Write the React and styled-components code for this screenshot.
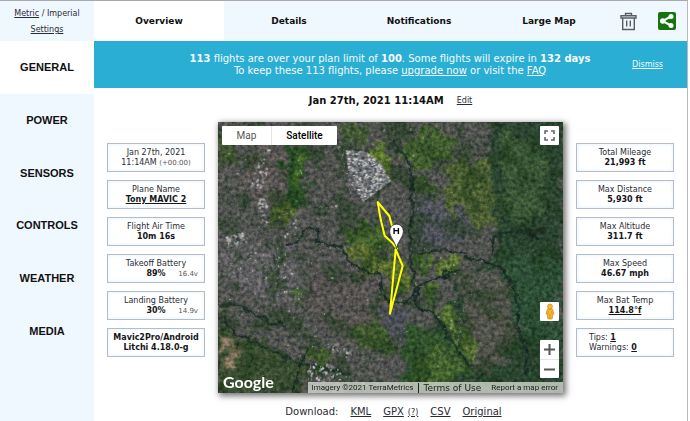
import { useState } from "react";
import styled, { createGlobalStyle } from "styled-components";

const GlobalStyle = createGlobalStyle`
  * {
    box-sizing: border-box;
  }

  body {
    margin: 0;
    background: #fff;
    font-family: "DejaVu Sans", Verdana, sans-serif;
    font-size: 8px;
    color: #2b2b35;
  }

  a {
    color: inherit;
  }

  button {
    font: inherit;
    color: inherit;
    border: none;
    padding: 0;
    background: none;
    cursor: pointer;
  }
`;

const Page = styled.div`
  display: flex;
  min-height: 100vh;
  margin-right: 2px;
  border-top: 1px solid #a9a9ad;
  border-right: 1px solid #b9b9bd;
`;

const Sidebar = styled.aside`
  display: flex;
  flex-direction: column;
  flex: 0 0 94px;
  background: #f0f8ff;
`;

const Units = styled.div`
  display: flex;
  flex-direction: column;
  align-items: center;
  height: 40px;
  padding-top: 5px;
  line-height: 16px;
`;

const SideNav = styled.nav`
  display: grid;
  grid-auto-rows: 1fr;
  min-height: 316px;
`;

const SideButton = styled.button`
  font-family: "Liberation Sans", Arial, sans-serif;
  font-size: 11px;
  font-weight: bold;
  color: #111;
  background: ${(props) => (props.$active ? "#fff" : "transparent")};
`;

const Main = styled.main`
  flex: 1;
  min-width: 0;
`;

const TopBar = styled.header`
  display: flex;
  height: 40px;
  background: #f0f8ff;
`;

const Tab = styled.button`
  flex: 130 1 0;
  font-size: 9px;
  font-weight: bold;
  color: #111;
  background: ${(props) => (props.$active ? "#fff" : "transparent")};
`;

const Tools = styled.div`
  display: flex;
  flex: 68 1 0;
  align-items: center;
  justify-content: center;
  gap: 21px;
  padding-right: 5px;

  button {
    display: flex;
  }
`;

const Banner = styled.section`
  display: flex;
  align-items: center;
  height: 47px;
  padding: 0 24px;
  background: #2aaed3;
  color: #f4fcff;
`;

const BannerText = styled.p`
  flex: 1;
  margin: 0;
  padding-left: 30px;
  font-size: 10px;
  line-height: 12px;
  text-align: center;
`;

const LinkButton = styled.button`
  text-decoration: underline;
`;

const TitleRow = styled.div`
  display: flex;
  align-items: center;
  justify-content: center;
  gap: 13px;
  height: 34px;
  padding: 0 0 10px;
`;

const Title = styled.h1`
  margin: 0;
  font-size: 10px;
  color: #111;
`;

const Overview = styled.div`
  display: grid;
  grid-template-columns: 98px 1fr 98px;
  gap: 13px;
  padding: 0 13px;
`;

const Stats = styled.div`
  display: flex;
  flex-direction: column;
  gap: 8px;
  padding-top: 21px;
`;

const StatBox = styled.div`
  display: flex;
  flex-direction: column;
  justify-content: center;
  height: 29px;
  padding: 0 ${(props) => (props.$left ? "12px" : "0")};
  border: 1px solid #b4bcc8;
  box-shadow: inset 0 0 4px #e4f1fd;
  line-height: 10px;
  text-align: ${(props) => (props.$left ? "left" : "center")};
  white-space: nowrap;

  b {
    color: #15151a;
  }
`;

const ValueRow = styled.div`
  display: grid;
  grid-template-columns: 1fr auto 1fr;
  padding-right: 6px;
  padding-left: 6px;
`;

const Small = styled.small`
  font-size: 7px;
  color: #55555c;
`;

const Volts = styled(Small)`
  grid-column: 3;
  text-align: right;
`;

const Value = styled.b`
  grid-column: 2;
`;

const MapFrame = styled.div`
  position: relative;
  aspect-ratio: 345 / 271;
  box-shadow: 2px 2px 6px 1px rgba(0, 0, 0, 0.55);
  overflow: hidden;
  font-family: Roboto, sans-serif;
`;

const Terrain = styled.svg`
  display: block;
  width: 100%;
  height: 100%;
`;

const MapTypes = styled.div`
  position: absolute;
  top: 4px;
  left: 4px;
  display: flex;
  height: 19px;
  background: #fff;
  border-radius: 1px;
`;

const MapType = styled.button`
  width: ${(props) => (props.$active ? "66px" : "49px")};
  border-left: ${(props) => (props.$active ? "1px solid #e6e6e6" : "none")};
  font-size: 10px;
  font-weight: ${(props) => (props.$active ? 500 : 400)};
  color: ${(props) => (props.$active ? "#000" : "#565656")};
`;

const FullScreen = styled.button`
  position: absolute;
  top: 4px;
  right: 4px;
  display: grid;
  place-items: center;
  width: 19px;
  height: 19px;
  background: #fff;
  border-radius: 1px;
`;

const Controls = styled.div`
  position: absolute;
  right: 4px;
  bottom: 15px;
  display: flex;
  flex-direction: column;
  gap: 19px;
`;

const ControlGroup = styled.div`
  display: flex;
  flex-direction: column;
  background: #fff;
  border-radius: 1px;

  button {
    display: grid;
    place-items: center;
    width: 19px;
    height: 19px;
  }

  button + button {
    border-top: 1px solid #e6e6e6;
  }
`;

const Logo = styled.a`
  position: absolute;
  bottom: 1px;
  left: 5px;
  font-family: Lato, sans-serif;
  font-size: 16px;
  font-weight: bold;
  line-height: 20px;
  color: #fff;
  text-decoration: none;
`;

const Credits = styled.div`
  position: absolute;
  right: 0;
  bottom: 0;
  display: flex;
  align-items: center;
  height: 11px;
  padding-left: 4px;
  background: rgba(214, 219, 210, 0.78);
  color: #222;
  white-space: nowrap;

  a {
    padding: 0 5px;
    text-decoration: none;
  }
`;

const Terms = styled.a`
  margin-left: 4px;
  border-left: 1px solid #222;
  font-family: "DejaVu Sans", Verdana, sans-serif;
  font-size: 9px;
`;

const Downloads = styled.footer`
  display: flex;
  align-items: center;
  justify-content: center;
  gap: 12px;
  height: 36px;
  padding-left: 6px;
  font-size: 10px;
`;

const DownloadGroup = styled.span`
  display: flex;
  align-items: baseline;
  gap: 4px;

  a + a {
    font-size: 8px;
  }
`;

const sections = ["GENERAL", "POWER", "SENSORS", "CONTROLS", "WEATHER", "MEDIA"];
const tabs = ["Overview", "Details", "Notifications", "Large Map"];

const rightStats = [
  { label: "Total Mileage", value: "21,993 ft" },
  { label: "Max Distance", value: "5,930 ft" },
  { label: "Max Altitude", value: "311.7 ft" },
  { label: "Max Speed", value: "46.67 mph" },
  { label: "Max Bat Temp", value: "114.8°f", link: true },
];

const patches = [
  // woodland on the east side
  { fill: "#2b4430", d: "M820 0H1040V830H560L600 640 690 600 740 480 830 400 850 330 800 240Z" },
  { fill: "#3a5636", d: "M850 30 960 60 1000 200 940 310 850 270Z" },
  { fill: "#2f5038", d: "M860 400 1035 420V620L950 680 890 560Z" },
  { fill: "#32522d", d: "M570 600 700 640 780 760 700 800 560 800Z" },
  { fill: "#43622f", d: "M600 700 680 680 740 740 700 800 590 790Z" },
  { fill: "#51534b", d: "M740 480 850 440 900 600 880 730 800 760 720 610Z" },
  // parkland
  { fill: "#4d5f34", d: "M690 130 820 110 840 330 740 310 680 240Z" },
  { fill: "#415c2f", d: "M560 60 660 30 720 80 660 130 590 150 550 110Z" },
  { fill: "#3a512e", d: "M590 180 650 190 670 280 610 300Z" },
  { fill: "#5b762d", d: "M455 100 500 70 525 130 515 170Z" },
  { fill: "#274a24", d: "M205 80 270 80 275 200 250 260 205 240Z" },
  { fill: "#426429", d: "M225 130 270 100 260 210 235 230Z" },
  { fill: "#4b5d2a", d: "M160 270 220 240 250 260 210 310 160 330Z" },
  { fill: "#486431", d: "M400 330 470 300 510 350 530 400 440 380 390 370Z" },
  { fill: "#586a30", d: "M385 385 440 370 510 410 590 420 590 510 540 520 490 450 420 440Z" },
  { fill: "#5e7434", d: "M650 440 700 400 740 410 730 460 660 470Z" },
  { fill: "#527032", d: "M600 410 640 400 640 450 605 465Z" },
  { fill: "#4b6832", d: "M610 490 660 490 660 540 620 550Z" },
  { fill: "#587234", d: "M640 560 720 570 725 650 660 600Z" },
  { fill: "#556d34", d: "M730 640 780 670 770 740 720 690Z" },
  { fill: "#41582f", d: "M390 640 480 590 560 650 520 710 420 680Z" },
  { fill: "#3b4d31", d: "M0 620 120 660 250 720 260 820H0Z" },
  { fill: "#42592c", d: "M265 700 310 680 350 720 300 740Z" },
  { fill: "#405c30", d: "M210 500 260 510 250 550 220 545Z" },
  { fill: "#445631", d: "M0 30 50 40 60 130 0 140Z" },
  { fill: "#425735", d: "M375 10 450 20 470 70 400 70Z" },
  // denser suburbs
  { fill: "#5b5654", d: "M100 80 200 90 200 230 150 260 80 200Z" },
  { fill: "#5d5d5e", d: "M0 370 190 370 260 460 210 560 60 510 0 440Z" },
  { fill: "#4f5259", d: "M600 210 700 260 790 320 720 380 600 390Z" },
  { fill: "#4a4e54", d: "M500 570 590 570 560 680 510 640Z" },
  { fill: "#565351", d: "M280 440 480 460 480 590 380 640 270 590Z" },
  { fill: "#857660", d: "M25 670 65 660 70 710 45 740 20 710Z" },
  { fill: "#7f6f58", d: "M495 480 512 485 515 550 500 550Z" },
  { fill: "#746e5a", d: "M0 550 50 552 40 565 5 563Z" },
  { fill: "#1c281e", d: "M900 330 970 325 975 345 930 348Z" },
];

const rivers = [
  "M200 375 240 370 275 320 310 330 300 365 375 380 400 435 470 460 490 460 500 540 560 550 600 520 600 500 680 470 730 450",
  "M585 170 580 400 600 560 650 580 720 690 760 740",
  "M530 60 580 140 580 220",
  "M740 410 800 420 860 450 900 530 905 640 930 680 925 770",
  "M830 400 830 350 900 330 980 360",
  "M0 550 70 560 150 600 210 620",
  "M20 590 50 640 140 680 250 730 380 760",
  "M265 690 240 760 230 820",
  "M600 400 680 390 750 400",
];

const roads = [
  "M270 265 360 258 405 215 385 150 360 30",
  "M10 140 50 220 75 300",
  "M720 680 740 550 790 470 830 420",
  "M260 600 370 680 470 770",
  "M60 380 140 310 250 270",
  "M110 540 140 430",
];

const estates = [
  { points: "385,90 450,95 490,130 523,183 440,245 400,190", count: 520, box: [385, 88, 140, 160] },
  { points: "140,80 162,85 145,205 98,205", count: 90, box: [98, 80, 65, 130] },
  { points: "120,235 155,235 150,310 130,305", count: 42, box: [118, 235, 40, 75] },
  { points: "190,350 255,265 265,270 235,340 200,365", count: 65, box: [190, 265, 75, 100] },
  { points: "25,350 85,335 90,370 30,385", count: 80, box: [25, 335, 65, 50] },
  { points: "270,740 310,720 350,740 400,770 360,785 270,785", count: 90, box: [270, 720, 130, 65] },
  { points: "320,670 400,680 410,720 330,690", count: 35, box: [320, 670, 90, 50] },
  { points: "30,400 200,390 270,540 210,540 50,470", count: 150, box: [30, 380, 240, 170] },
  { points: "0,20 1035,20 1035,800 0,800", count: 130, box: [0, 20, 720, 780] },
];

const shades = ["#e2e3df", "#b4b7b6", "#96999a", "#cfd2d3", "#777b7d"];

// same sequence on every render, so the roofs stay where they are
const createRandom = (seed) => () => {
  seed = (seed * 16807) % 2147483647;
  return seed / 2147483647;
};

const roofs = estates.map((estate, index) => {
  const random = createRandom(71 + index * 131);
  const [x, y, width, height] = estate.box;
  return Array.from({ length: estate.count }, () => ({
    x: x + random() * width,
    y: y + random() * height,
    width: 2 + random() * 6,
    height: 2 + random() * 5,
    fill: shades[Math.floor(random() * shades.length)],
  }));
});

const SatelliteImage = () => (
  <Terrain
    viewBox="3 6 1035 813"
    preserveAspectRatio="xMidYMid slice"
    colorInterpolationFilters="sRGB"
    role="img"
    aria-label="Flight track"
  >
    <defs>
      <filter id="ragged" x="-5%" y="-5%" width="110%" height="110%">
        <feTurbulence type="fractalNoise" baseFrequency="0.025" numOctaves="4" seed="4" result="noise" />
        <feDisplacementMap in="SourceGraphic" in2="noise" scale="80" xChannelSelector="R" yChannelSelector="G" />
        <feGaussianBlur stdDeviation="3" />
      </filter>
      <filter id="wavy" x="-5%" y="-5%" width="110%" height="110%">
        <feTurbulence type="fractalNoise" baseFrequency="0.04" numOctaves="3" seed="9" result="noise" />
        <feDisplacementMap in="SourceGraphic" in2="noise" scale="26" xChannelSelector="R" yChannelSelector="G" />
      </filter>
      <filter id="grain" x="0" y="0" width="100%" height="100%">
        <feTurbulence type="fractalNoise" baseFrequency="0.09" numOctaves="4" seed="12" />
        <feColorMatrix values="1 0 0 0 0  0.8 0.2 0 0 0  0.8 0 0.2 0 0  0 0 0 0 1" />
      </filter>
      <filter id="trees" x="0" y="0" width="100%" height="100%">
        <feTurbulence type="fractalNoise" baseFrequency="0.014" numOctaves="6" seed="23" />
        <feColorMatrix values="0 0 0 0 0.11  0 0 0 0 0.22  0 0 0 0 0.1  0 5 0 0 -2.4" />
      </filter>
      {estates.map((estate, index) => (
        <clipPath id={`estate-${index}`} key={index}>
          <polygon points={estate.points} />
        </clipPath>
      ))}
    </defs>
    <rect width="1040" height="830" fill="#515350" />
    <g filter="url(#ragged)">
      {patches.map((patch) => (
        <path key={patch.d} d={patch.d} fill={patch.fill} />
      ))}
    </g>
    <rect width="1040" height="830" filter="url(#trees)" opacity="0.5" />
    <g filter="url(#wavy)" fill="none">
      {roads.map((d) => (
        <path key={d} d={d} stroke="#74777a" strokeWidth="3" opacity="0.6" />
      ))}
      {rivers.map((d) => (
        <path key={d} d={d} stroke="#182b26" strokeWidth="7" opacity="0.85" />
      ))}
      <circle cx="690" cy="465" r="11" stroke="#182b26" strokeWidth="7" />
    </g>
    <polygon points={estates[0].points} fill="#66686b" />
    {roofs.map((group, index) => (
      <g key={index} clipPath={`url(#estate-${index})`} opacity={index > 6 ? 0.4 : 0.85}>
        {group.map((roof, i) => (
          <rect key={i} {...roof} />
        ))}
      </g>
    ))}
    <rect width="1040" height="830" filter="url(#grain)" opacity="0.65" style={{ mixBlendMode: "overlay" }} />
    <path
      d="M541 388 526 368 503 347 491 298 482 246 517 288 525 317 524 340M536 388 557 438 519 581Z"
      fill="none"
      stroke="#ffff0a"
      strokeWidth="6"
      strokeLinejoin="round"
    />
    <path
      d="M538 387C536 365 518 352 518 333A20 20 0 0 1 559 333C559 352 541 365 538 387Z"
      fill="#fff"
      stroke="#222"
      strokeWidth="2"
    />
    <text
      x="538"
      y="343"
      textAnchor="middle"
      fontFamily="Liberation Sans, Arial, sans-serif"
      fontSize="29"
      fontWeight="bold"
      fill="#000"
    >
      H
    </text>
  </Terrain>
);

const TrashIcon = () => (
  <svg width="17" height="19" viewBox="0 0 17 19" fill="none" stroke="#595d63" strokeWidth="1.4">
    <path d="M5.5 3.5V1.5H11.5V3.5M1 6V3.7H16V6ZM2.7 6V17.5H14.3V6M6.7 8.5V14.5M10.3 8.5V14.5" />
  </svg>
);

const ShareIcon = () => (
  <svg width="18" height="18" viewBox="0 0 18 18">
    <rect width="18" height="18" rx="2" fill="#167410" />
    <path d="M13 4.5 4.5 9 13 13.5" fill="none" stroke="#fff" strokeWidth="2" />
    <circle cx="13" cy="4.6" r="2.5" fill="#fff" />
    <circle cx="4.7" cy="9" r="2.7" fill="#fff" />
    <circle cx="13" cy="13.4" r="2.5" fill="#fff" />
  </svg>
);

const Pegman = () => (
  <svg width="10" height="17" viewBox="0 0 10 17" fill="#fbb62d" stroke="#c47f1c" strokeWidth="0.6">
    <path d="M2.5 6H7.5L9 11 7.7 11.5 7.2 16H2.8L2.3 11.5 1 11Z" />
    <circle cx="5" cy="3.5" r="2.5" />
    <path d="M5 11V16M3 8V11M7 8V11" />
  </svg>
);

const App = () => {
  const [section, setSection] = useState("GENERAL");
  const [tab, setTab] = useState("Overview");
  const [mapType, setMapType] = useState("Satellite");
  const [showBanner, setShowBanner] = useState(true);

  return (
    <>
      <GlobalStyle />
      <Page>
        <Sidebar>
          <Units>
            <span>
              <a href="#metric">Metric</a> / Imperial
            </span>
            <a href="#settings">Settings</a>
          </Units>
          <SideNav>
            {sections.map((name) => (
              <SideButton
                key={name}
                type="button"
                $active={name === section}
                onClick={() => setSection(name)}
              >
                {name}
              </SideButton>
            ))}
          </SideNav>
        </Sidebar>
        <Main>
          <TopBar>
            {tabs.map((name) => (
              <Tab key={name} type="button" $active={name === tab} onClick={() => setTab(name)}>
                {name}
              </Tab>
            ))}
            <Tools>
              <button type="button" aria-label="Delete">
                <TrashIcon />
              </button>
              <button type="button" aria-label="Share">
                <ShareIcon />
              </button>
            </Tools>
          </TopBar>
          {showBanner && (
            <Banner>
              <BannerText>
                <b>113</b> flights are over your plan limit of <b>100</b>. Some flights will expire in{" "}
                <b>132 days</b>
                <br />
                To keep these 113 flights, please <a href="#upgrade">upgrade now</a> or visit the{" "}
                <a href="#faq">FAQ</a>
              </BannerText>
              <LinkButton type="button" onClick={() => setShowBanner(false)}>
                Dismiss
              </LinkButton>
            </Banner>
          )}
          <TitleRow>
            <Title>Jan 27th, 2021 11:14AM</Title>
            <a href="#edit">Edit</a>
          </TitleRow>
          <Overview>
            <Stats>
              <StatBox>
                <span>Jan 27th, 2021</span>
                <span>
                  11:14AM <Small>(+00:00)</Small>
                </span>
              </StatBox>
              <StatBox>
                <span>Plane Name</span>
                <b>
                  <a href="#plane">Tony MAVIC 2</a>
                </b>
              </StatBox>
              <StatBox>
                <span>Flight Air Time</span>
                <b>10m 16s</b>
              </StatBox>
              <StatBox>
                <span>Takeoff Battery</span>
                <ValueRow>
                  <Value>89%</Value>
                  <Volts>16.4v</Volts>
                </ValueRow>
              </StatBox>
              <StatBox>
                <span>Landing Battery</span>
                <ValueRow>
                  <Value>30%</Value>
                  <Volts>14.9v</Volts>
                </ValueRow>
              </StatBox>
              <StatBox>
                <b>Mavic2Pro/Android</b>
                <b>Litchi 4.18.0-g</b>
              </StatBox>
            </Stats>
            <MapFrame>
              <SatelliteImage />
              <MapTypes>
                {["Map", "Satellite"].map((name) => (
                  <MapType
                    key={name}
                    type="button"
                    $active={name === mapType}
                    onClick={() => setMapType(name)}
                  >
                    {name}
                  </MapType>
                ))}
              </MapTypes>
              <FullScreen type="button" aria-label="Full screen">
                <svg width="11" height="11" viewBox="0 0 11 11" fill="none" stroke="#666" strokeWidth="1.6">
                  <path d="M1 4V1H4M7 1H10V4M10 7V10H7M4 10H1V7" />
                </svg>
              </FullScreen>
              <Controls>
                <ControlGroup>
                  <button type="button" aria-label="Street view">
                    <Pegman />
                  </button>
                </ControlGroup>
                <ControlGroup>
                  <button type="button" aria-label="Zoom in">
                    <svg width="11" height="11" viewBox="0 0 11 11" stroke="#555" strokeWidth="2">
                      <path d="M0 5.5H11M5.5 0V11" />
                    </svg>
                  </button>
                  <button type="button" aria-label="Zoom out">
                    <svg width="11" height="11" viewBox="0 0 11 11" stroke="#555" strokeWidth="2">
                      <path d="M0 5.5H11" />
                    </svg>
                  </button>
                </ControlGroup>
              </Controls>
              <Logo href="#google">Google</Logo>
              <Credits>
                <span>Imagery ©2021 TerraMetrics</span>
                <Terms href="#terms">Terms of Use</Terms>
                <a href="#report">Report a map error</a>
              </Credits>
            </MapFrame>
            <Stats>
              {rightStats.map((stat) => (
                <StatBox key={stat.label}>
                  <span>{stat.label}</span>
                  <b>{stat.link ? <a href="#temp">{stat.value}</a> : stat.value}</b>
                </StatBox>
              ))}
              <StatBox $left>
                <span>
                  Tips: <b><a href="#tips">1</a></b>
                </span>
                <span>
                  Warnings: <b><a href="#warnings">0</a></b>
                </span>
              </StatBox>
            </Stats>
          </Overview>
          <Downloads>
            <span>Download:</span>
            <a href="#kml">KML</a>
            <DownloadGroup>
              <a href="#gpx">GPX</a>
              <a href="#help">(?)</a>
            </DownloadGroup>
            <a href="#csv">CSV</a>
            <a href="#original">Original</a>
          </Downloads>
        </Main>
      </Page>
    </>
  );
};

export default App;
